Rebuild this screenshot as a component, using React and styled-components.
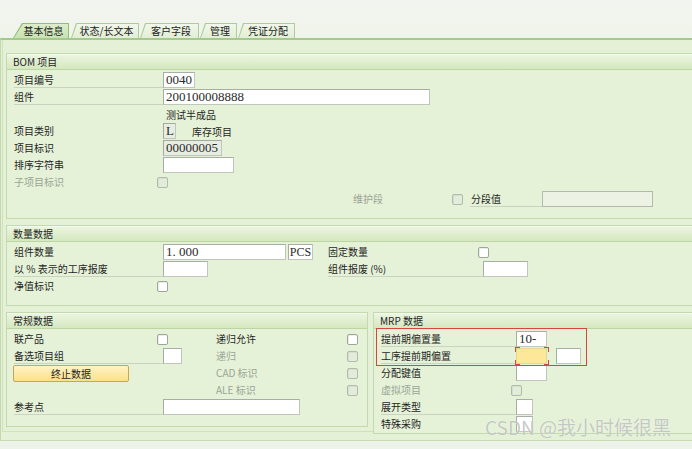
import React from 'react';
import styled, { createGlobalStyle, css } from 'styled-components';

const GlobalStyle = createGlobalStyle`
  html, body { margin: 0; padding: 0; }
  body {
    background: #eef3e9;
    overflow: hidden;
    font-family: "Noto Sans CJK SC", "Noto Sans", sans-serif;
    font-size: 10px;
    color: #1f1f1f;
  }
`;

const Page = styled.div`
  position: relative;
  width: 692px;
  height: 449px;
  overflow: hidden;
  box-sizing: border-box;
  padding-top: 23px;
  background: linear-gradient(#f2f5ef 0, #eff4ea 40px, #eef3e9 100%);
`;

const TabStrip = styled.div`
  display: flex;
  align-items: flex-end;
  height: 15px;
  padding-left: 13px;
`;

const Tab = styled.div`
  width: ${p => p.$w}px;
  margin-right: ${p => p.$gap || 1}px;
  height: 15px;
  box-sizing: border-box;
  padding: 1px 1px 0 1px;
  background: ${p => (p.$active ? '#93bd78' : '#b0cb9b')};
  clip-path: polygon(${p => p.$slant}px 0, 100% 0, 100% 100%, 0 100%);
`;

const TabFace = styled.div`
  height: 100%;
  display: flex;
  align-items: center;
  justify-content: center;
  padding-left: ${p => Math.round(p.$slant * 0.6)}px;
  box-sizing: border-box;
  font-size: 10px;
  line-height: 14px;
  color: #1b1b1b;
  white-space: nowrap;
  background: ${p =>
    p.$active
      ? 'linear-gradient(#dcedca, #c9e2b1)'
      : 'linear-gradient(#f1f7ea, #e2eed5)'};
  clip-path: polygon(${p => p.$slant}px 0, 100% 0, 100% 100%, 0 100%);
`;

const Panel = styled.div`
  width: 720px;
  height: 403px;
  box-sizing: border-box;
  border-top: 2px solid #a5c98b;
  border-left: 1px solid #c2d9ae;
  border-bottom: 1px solid #c6dbb3;
  background: #e5f1d6;
`;

const Frame = styled.div`
  margin-left: 1px;
  height: 392px;
  box-sizing: border-box;
  border-left: 1px solid #cfe2bd;
  border-bottom: 1px solid #cfe2bd;
  padding: 13px 0 0 3px;
  display: flex;
  flex-direction: column;
  gap: 6px;
`;

const Group = styled.section`
  position: relative;
  box-sizing: border-box;
  width: ${p => (p.$w ? `${p.$w}px` : 'auto')};
  flex: ${p => (p.$w ? '0 0 auto' : '1 1 auto')};
  border: 1px solid #c3d9ae;
  border-right: ${p => (p.$w ? '1px solid #c3d9ae' : 'none')};
  background: #e6f2d8;
  padding-bottom: ${p => p.$pb}px;
`;

const GroupHeader = styled.header`
  height: 16px;
  box-sizing: border-box;
  padding-left: 6px;
  line-height: 15px;
  font-size: 10px;
  color: #262626;
  background: linear-gradient(#ecf5e2, #d5e8bf);
  border-bottom: 1px solid #bcd5a5;
  box-shadow: inset 0 1px 0 #f4f9ee;
`;

const Body = styled.div`
  display: flex;
  flex-direction: column;
  gap: 1px;
  padding-top: 2px;
`;

const Row = styled.div`
  display: flex;
  align-items: center;
  height: 16px;
  padding-left: 7px;
`;

const Columns = styled.div`
  display: flex;
  align-items: flex-start;
  gap: 5px;
`;

const Cell = styled.div`
  display: flex;
  align-items: center;
  width: ${p => p.$w}px;
  flex: 0 0 auto;
  height: 16px;
`;

const Label = styled.div`
  width: ${p => p.$w}px;
  flex: 0 0 auto;
  height: 16px;
  box-sizing: border-box;
  line-height: 15px;
  margin-left: ${p => p.$ml || 0}px;
  padding-left: ${p => p.$pl || 0}px;
  white-space: nowrap;
  font-size: 10px;
  color: ${p => (p.$dis ? '#9ba496' : '#1f1f1f')};
  border-bottom: 1px solid ${p => (p.$line ? '#c9d3bf' : 'transparent')};
`;

const Note = styled.div`
  font-size: 10px;
  line-height: 15px;
  white-space: nowrap;
  color: #1f1f1f;
  padding-left: ${p => p.$pl || 0}px;
`;

const fieldVariants = {
  white: css`
    background: #ffffff;
    border-color: #a7aea3 #c0c6bc #c0c6bc #a7aea3;
  `,
  ro: css`
    background: #e8ede2;
    border-color: #a3a99f #bfc5bb #bfc5bb #a3a99f;
  `,
  dis: css`
    background: #ecf3e5;
    border-color: #b3b9ae;
  `,
  yellow: css`
    background: #fde899;
    border-color: #e9d58e;
  `,
};

const Field = styled.div`
  position: relative;
  width: ${p => p.$w}px;
  flex: 0 0 auto;
  height: 16px;
  margin-left: ${p => p.$ml || 0}px;
  box-sizing: border-box;
  border: 1px solid;
  padding: 0 ${p => (p.$tight ? 0 : 2)}px;
  font-family: "Liberation Serif", "Noto Sans CJK SC", serif;
  font-size: ${p => (p.$tight ? 12 : 13)}px;
  line-height: 14px;
  color: #2a2a2a;
  white-space: pre;
  text-align: ${p => (p.$tight ? 'center' : 'left')};
  ${p => fieldVariants[p.$v || 'white']}
`;

const Check = styled.div`
  width: 11px;
  height: 11px;
  flex: 0 0 auto;
  box-sizing: border-box;
  margin-left: ${p => p.$ml || 0}px;
  border: 1px solid ${p => (p.$dis ? '#b2baac' : '#9ea69a')};
  border-radius: 2px;
  background: ${p => (p.$dis ? '#e3ebda' : '#ffffff')};
  box-shadow: inset 1px 1px 0 ${p => (p.$dis ? '#d7dfcf' : '#eceeea')};
`;

const Button = styled.div`
  width: 116px;
  height: 17px;
  margin-left: -1px;
  box-sizing: border-box;
  border: 1px solid #c4a955;
  border-radius: 2px;
  background: linear-gradient(#fff3c4, #fbe08b);
  font-size: 10px;
  line-height: 15px;
  text-align: center;
  color: #1f1f1f;
`;

const Brackets = styled.div`
  position: absolute;
  left: -2px;
  top: -2px;
  right: -3px;
  bottom: -2px;
  pointer-events: none;
  --c: #d8453b;
  background:
    linear-gradient(var(--c), var(--c)) top left / 5px 1px no-repeat,
    linear-gradient(var(--c), var(--c)) top left / 1px 5px no-repeat,
    linear-gradient(var(--c), var(--c)) top right / 5px 1px no-repeat,
    linear-gradient(var(--c), var(--c)) top right / 1px 5px no-repeat,
    linear-gradient(var(--c), var(--c)) bottom left / 5px 1px no-repeat,
    linear-gradient(var(--c), var(--c)) bottom left / 1px 5px no-repeat,
    linear-gradient(var(--c), var(--c)) bottom right / 5px 1px no-repeat,
    linear-gradient(var(--c), var(--c)) bottom right / 1px 5px no-repeat;
`;

const Highlight = styled.div`
  position: absolute;
  left: 2px;
  top: 15px;
  width: 211px;
  height: 38px;
  box-sizing: border-box;
  border: 1.5px solid #d8453b;
  pointer-events: none;
`;

const Watermark = styled.div`
  position: absolute;
  left: 485px;
  top: 416px;
  font-family: "Noto Sans CJK SC", "Liberation Sans", sans-serif;
  font-size: 19px;
  line-height: 22px;
  color: rgba(150, 155, 150, 0.55);
  text-shadow: 0 0 1px rgba(255, 255, 255, 0.9);
  white-space: nowrap;
  pointer-events: none;
`;

const tabs = [
  { t: '基本信息', w: 56, slant: 9, active: true, gap: 2 },
  { t: '状态/长文本', w: 68, slant: 5 },
  { t: '客户字段', w: 59, slant: 5 },
  { t: '管理', w: 37, slant: 5 },
  { t: '凭证分配', w: 57, slant: 5 },
];

export default function App() {
  return (
    <>
      <GlobalStyle />
      <Page>
        <TabStrip>
          {tabs.map(tb => (
            <Tab key={tb.t} $w={tb.w} $slant={tb.slant} $active={tb.active} $gap={tb.gap}>
              <TabFace $slant={tb.slant} $active={tb.active}>{tb.t}</TabFace>
            </Tab>
          ))}
        </TabStrip>
        <Panel>
          <Frame>
            <Group $pb={11}>
              <GroupHeader>BOM 项目</GroupHeader>
              <Body>
                <Row>
                  <Label $w={149} $line>项目编号</Label>
                  <Field $w={32}>0040</Field>
                </Row>
                <Row>
                  <Label $w={149} $line>组件</Label>
                  <Field $w={267}>200100008888</Field>
                </Row>
                <Row>
                  <Cell $w={149} />
                  <Note $pl={3}>测试半成品</Note>
                </Row>
                <Row>
                  <Label $w={149}>项目类别</Label>
                  <Field $w={13} $v="ro">L</Field>
                  <Note $pl={16}>库存项目</Note>
                </Row>
                <Row>
                  <Label $w={149}>项目标识</Label>
                  <Field $w={59} $v="ro">00000005</Field>
                </Row>
                <Row>
                  <Label $w={149}>排序字符串</Label>
                  <Field $w={71} />
                </Row>
                <Row>
                  <Label $w={143} $dis>子项目标识</Label>
                  <Check $dis />
                </Row>
                <Row>
                  <Cell $w={339} />
                  <Label $w={99} $dis>维护段</Label>
                  <Check $dis />
                  <Label $w={72} $pl={1} $ml={7} $line>分段值</Label>
                  <Field $w={111} $v="dis" />
                </Row>
              </Body>
            </Group>

            <Group $pb={11}>
              <GroupHeader>数量数据</GroupHeader>
              <Body>
                <Row>
                  <Cell $w={314}>
                    <Label $w={149}>组件数量</Label>
                    <Field $w={123}>1. 000</Field>
                    <Field $w={25} $ml={2} $tight>PCS</Field>
                  </Cell>
                  <Label $w={150}>固定数量</Label>
                  <Check />
                </Row>
                <Row>
                  <Cell $w={314}>
                    <Label $w={149} $line>以 % 表示的工序报废</Label>
                    <Field $w={45} />
                  </Cell>
                  <Label $w={155} $line>组件报废 (%)</Label>
                  <Field $w={45} />
                </Row>
                <Row>
                  <Label $w={143}>净值标识</Label>
                  <Check />
                </Row>
              </Body>
            </Group>

            <Columns>
              <Group $w={362} $pb={11}>
                <GroupHeader>常规数据</GroupHeader>
                <Body>
                  <Row>
                    <Cell $w={202}>
                      <Label $w={143}>联产品</Label>
                      <Check />
                    </Cell>
                    <Label $w={131}>递归允许</Label>
                    <Check />
                  </Row>
                  <Row>
                    <Cell $w={202}>
                      <Label $w={149} $line>备选项目组</Label>
                      <Field $w={19} />
                    </Cell>
                    <Label $w={131} $dis>递归</Label>
                    <Check $dis />
                  </Row>
                  <Row>
                    <Cell $w={202}>
                      <Button>终止数据</Button>
                    </Cell>
                    <Label $w={131} $dis>CAD 标识</Label>
                    <Check $dis />
                  </Row>
                  <Row>
                    <Cell $w={202} />
                    <Label $w={131} $dis>ALE 标识</Label>
                    <Check $dis />
                  </Row>
                  <Row>
                    <Label $w={149} $line>参考点</Label>
                    <Field $w={137} />
                  </Row>
                </Body>
              </Group>

              <Group $pb={1}>
                <GroupHeader>MRP 数据</GroupHeader>
                <Body>
                  <Row>
                    <Label $w={135} $line>提前期偏置量</Label>
                    <Field $w={31}>10-</Field>
                  </Row>
                  <Row>
                    <Label $w={135} $line>工序提前期偏置</Label>
                    <Field $w={31} $v="yellow">
                      <Brackets />
                    </Field>
                    <Field $w={25} $ml={9} />
                  </Row>
                  <Row>
                    <Label $w={135}>分配键值</Label>
                    <Field $w={31} />
                  </Row>
                  <Row>
                    <Label $w={130} $dis>虚拟项目</Label>
                    <Check $dis />
                  </Row>
                  <Row>
                    <Label $w={135} $line>展开类型</Label>
                    <Field $w={17} />
                  </Row>
                  <Row>
                    <Label $w={135}>特殊采购</Label>
                    <Field $w={17} />
                  </Row>
                </Body>
                <Highlight />
              </Group>
            </Columns>
          </Frame>
        </Panel>
        <Watermark>CSDN @我小时候很黑</Watermark>
      </Page>
    </>
  );
}
